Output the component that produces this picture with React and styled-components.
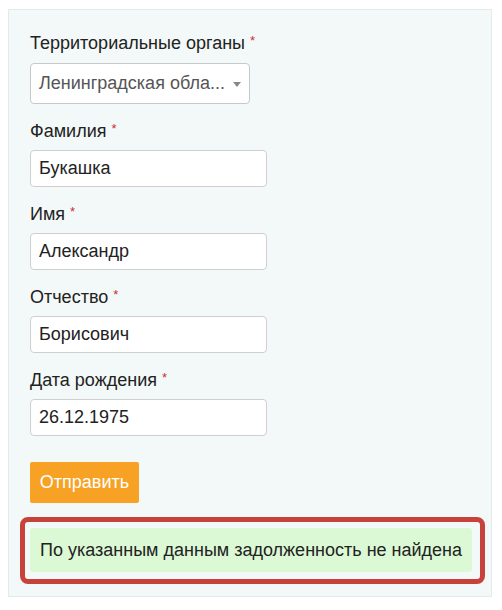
import styled, { createGlobalStyle } from 'styled-components';

const GlobalStyle = createGlobalStyle`
  body {
    margin: 8px;
    background: #ffffff;
    font-family: "Liberation Sans", Arial, sans-serif;
  }
`;

const fields = [
  { label: 'Фамилия', value: 'Букашка' },
  { label: 'Имя', value: 'Александр' },
  { label: 'Отчество', value: 'Борисович' },
  { label: 'Дата рождения', value: '26.12.1975' },
];

export default function App() {
  return (
    <>
      <GlobalStyle />
      <Panel>
        <Group>
          <Label $gap={10}>
            Территориальные органы <Star>*</Star>
          </Label>
          <Select>
            <SelectText>Ленинградская обла...</SelectText>
            <Caret />
          </Select>
        </Group>
        {fields.map((f) => (
          <Group key={f.label}>
            <Label>
              {f.label} <Star>*</Star>
            </Label>
            <Input>{f.value}</Input>
          </Group>
        ))}
        <SubmitButton>Отправить</SubmitButton>
        <Highlight>
          <Alert>По указанным данным задолженность не найдена</Alert>
        </Highlight>
      </Panel>
    </>
  );
}

const Panel = styled.div`
  width: 484px;
  box-sizing: border-box;
  margin-top: 1px;
  background: #f3f9f8;
  border: 1px solid #e2ebe9;
  padding: 23px 18px 12px 21px;
  display: flex;
  flex-direction: column;
  align-items: flex-start;
`;

const Group = styled.div`
  display: flex;
  flex-direction: column;
  margin-bottom: 17px;
`;

const Label = styled.div`
  font-size: 18px;
  line-height: 20px;
  height: 20px;
  color: #222;
  margin-bottom: ${(p) => p.$gap || 9}px;
`;

const Star = styled.span`
  color: #c9302c;
  font-size: 13px;
  line-height: 0;
  vertical-align: 4px;
`;

const Select = styled.div`
  width: 220px;
  height: 41px;
  box-sizing: border-box;
  border: 1px solid #c8c8c8;
  border-radius: 4px;
  background: #fff;
  display: flex;
  align-items: center;
  padding: 0 8px;
`;

const SelectText = styled.span`
  flex: 1;
  font-size: 18px;
  color: #555;
  white-space: nowrap;
`;

const Caret = styled.span`
  width: 0;
  height: 0;
  border-left: 4px solid transparent;
  border-right: 4px solid transparent;
  border-top: 5px solid #888;
  margin-top: 2px;
`;

const Input = styled.div`
  width: 237px;
  height: 37px;
  box-sizing: border-box;
  border: 1px solid #cfcfcf;
  border-radius: 4px;
  background: #fff;
  display: flex;
  align-items: center;
  padding: 0 8px;
  font-size: 18px;
  color: #222;
`;

const SubmitButton = styled.button`
  margin-top: 9px;
  width: 109px;
  height: 41px;
  border: none;
  border-radius: 2px;
  background: #f7a125;
  color: #fff;
  font-family: "Liberation Sans", Arial, sans-serif;
  font-size: 18px;
  padding: 0;
`;

const Highlight = styled.div`
  margin: 14px -12px 0 -10px;
  border: 5px solid #c8423c;
  border-radius: 8px;
  padding: 6px 8px 7px 5px;
  align-self: stretch;
`;

const Alert = styled.div`
  background: #dcf9d5;
  border-radius: 3px;
  height: 44px;
  display: flex;
  align-items: center;
  padding-left: 10px;
  font-size: 18px;
  color: #222;
`;
